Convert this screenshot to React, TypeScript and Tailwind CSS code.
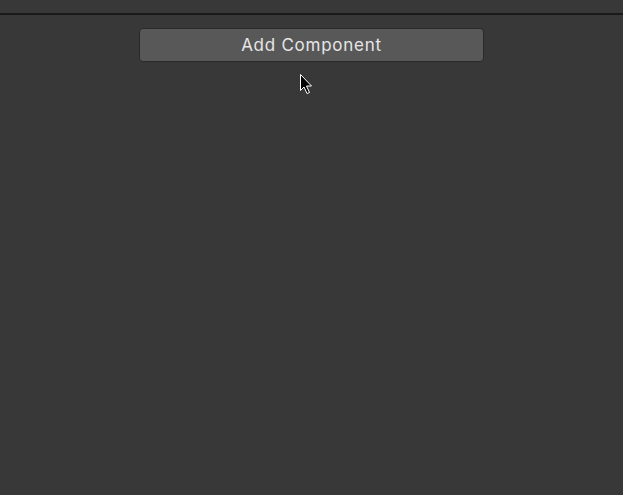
import React from "react";

export default function App() {
  return (
    <div className="relative w-[623px] h-[495px] bg-[#383838] overflow-hidden font-['Inter',sans-serif]">
      <div className="h-[13px]" />
      <div className="h-[2px] bg-[#1a1a1a]" />
      <div className="flex pl-[139px] pt-[13px]">
        <div className="w-[345px] h-[34px] rounded-[4px] border border-[#2a2a2a] bg-[#585858] flex items-center justify-center pt-[1px] text-[17px] tracking-[0.75px] text-[#e6e6e6]">
          Add Component
        </div>
      </div>
      <svg className="absolute left-[299px] top-[73px]" width="16" height="24" viewBox="0 0 16 24">
        <path d="M1.5 1.5 L1.5 17.5 L5 14 L8 20.5 L10.5 19.5 L7.5 13 L12.5 13 Z" fill="#000" stroke="#fff" strokeWidth="1" />
      </svg>
    </div>
  );
}
